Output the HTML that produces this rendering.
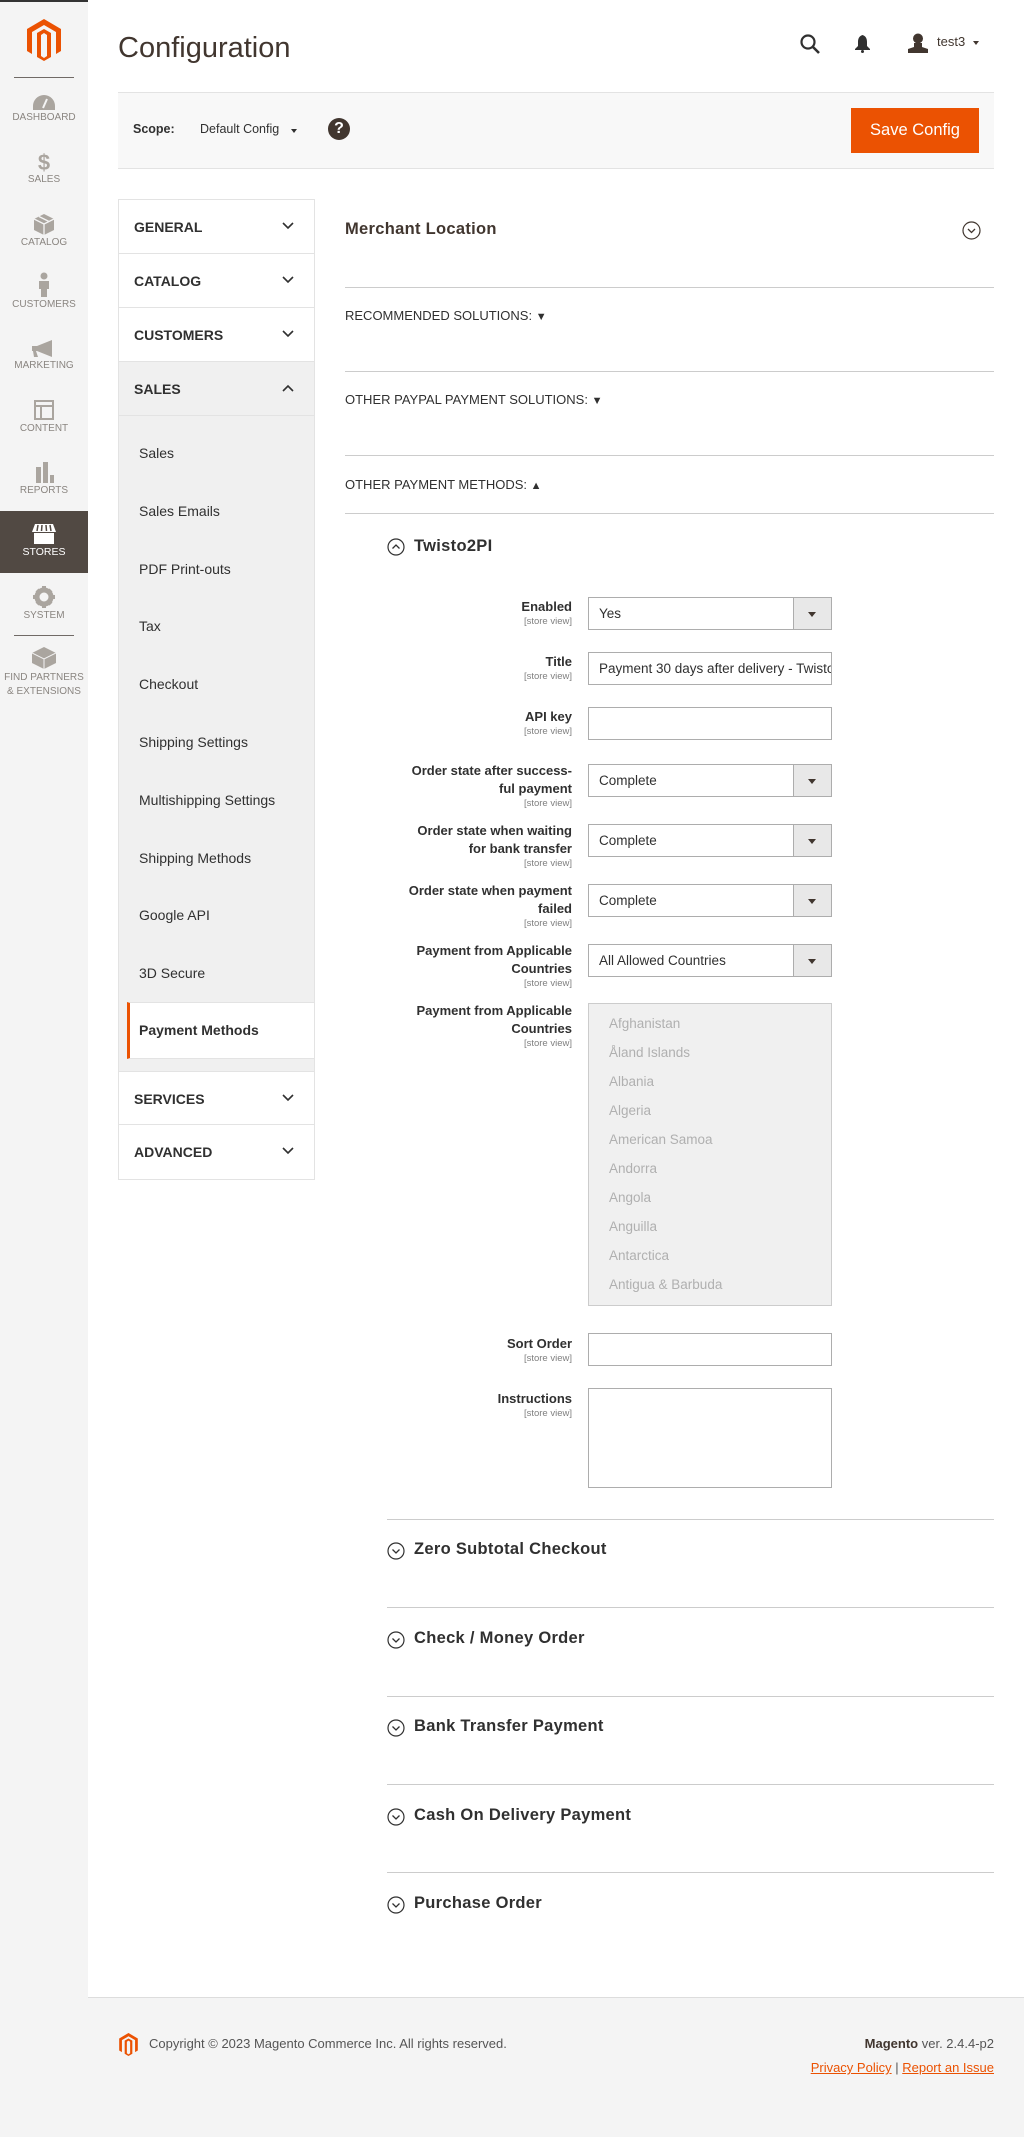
<!DOCTYPE html>
<html><head><meta charset="utf-8">
<style>
*{box-sizing:border-box;margin:0;padding:0}
body{width:1024px;height:2137px;position:relative;background:#fff;font-family:"Liberation Sans",Arial,sans-serif;color:#303030;overflow:hidden}
.abs{position:absolute}
#side{left:0;top:0;width:88px;height:2137px;background:#f4f4f4;border-top:2px solid #333}
.mi{position:absolute;left:0;width:88px;text-align:center;font-size:10px;color:#8a8580;letter-spacing:0}
.mi svg{display:block;margin:0 auto 2px}
.hr{position:absolute;left:14px;width:60px;height:1px;background:#706a66}
.nav{left:118px;width:197px;border:1px solid #e3e3e3;background:#fff}
.nh{height:54px;border-bottom:1px solid #e3e3e3;font-weight:bold;font-size:14px;line-height:54px;padding-left:15px;position:relative;color:#303030}
.nh svg{position:absolute;right:20px;top:22px}
.si{height:57.8px;line-height:58px;padding-left:20px;font-size:14px;color:#303030}
.lbl{position:absolute;right:452px;text-align:right;font-weight:bold;font-size:13px;line-height:18px;color:#303030}
.lbl small{display:block;font-weight:normal;font-size:9.5px;color:#808080;line-height:11px}
.inp{position:absolute;left:588px;width:244px;height:33px;border:1px solid #adadad;background:#fff;font-size:13.5px;line-height:31px;padding-left:10px;color:#303030;overflow:hidden;white-space:nowrap}
.sel:after{content:"";position:absolute;right:0;top:0;width:37px;height:31px;background:#e8e8e8;border-left:1px solid #adadad}
.sel:before{content:"";position:absolute;right:15px;top:14px;border:4px solid transparent;border-top:5px solid #41362f;z-index:2;border-bottom:0}
.line{position:absolute;height:1px;background:#ccc}
.sec{position:absolute;left:414px;font-size:16.5px;font-weight:bold;color:#303030;letter-spacing:.3px}
.circ{position:absolute;left:387px;width:18px;height:18px}
.grp{position:absolute;left:345px;font-size:13px;color:#303030}
</style></head><body>
<div id="side" class="abs">
 <svg class="abs" style="left:27px;top:17px" width="34" height="42" viewBox="0 0 34 42"><path d="M17 0L34 10V32L29 35V13L17 6L5 13V35L0 32V10Z M17 10L24 14V38L17 42L10 38V14Z M14 16V37L17 39L20 37V16L17 14Z" fill="#eb5202" fill-rule="evenodd"/></svg>
 <div class="hr" style="top:75px"></div>
 <div class="mi" style="top:93px"><svg width="22" height="15" viewBox="0 0 22 15"><path d="M11 0A11 11 0 0 0 0 11V15H22V11A11 11 0 0 0 11 0Z" fill="#aaa59f"/><path d="M10 13L14 4" stroke="#f4f4f4" stroke-width="2"/></svg>DASHBOARD</div>
 <div class="mi" style="top:150px"><div style="font-size:22px;font-weight:bold;color:#aaa59f;line-height:22px">$</div>SALES</div>
 <div class="mi" style="top:212px"><svg width="20" height="21" viewBox="0 0 20 21"><path d="M10 0L20 5V16L10 21L0 16V5Z" fill="#aaa59f"/><path d="M0 5L10 10L20 5M10 10V21M5 2.5L15 7.5" stroke="#f4f4f4" stroke-width="1.3" fill="none"/></svg>CATALOG</div>
 <div class="mi" style="top:270px"><svg width="12" height="25" viewBox="0 0 12 25"><circle cx="6" cy="4" r="3.5" fill="#aaa59f"/><path d="M1 9H11V17H9V25H3V17H1Z" fill="#aaa59f"/></svg>CUSTOMERS</div>
 <div class="mi" style="top:338px"><svg width="24" height="18" viewBox="0 0 24 18"><path d="M0 6H5L20 0V17L5 11H4L6 17H2L1 11H0Z" fill="#aaa59f"/></svg>MARKETING</div>
 <div class="mi" style="top:397px"><svg width="22" height="22" viewBox="0 0 22 22"><path d="M1 1H21V21H1Z M3 3V6H19V3Z M3 8V19H7V8Z M9 8V19H19V8Z" fill="#aaa59f" fill-rule="evenodd"/></svg>CONTENT</div>
 <div class="mi" style="top:460px"><svg width="20" height="21" viewBox="0 0 20 21"><path d="M2 5H7V21H2Z M9 0H14V21H9Z M16 13H20V21H16Z" fill="#aaa59f"/></svg>REPORTS</div>
 <div class="abs" style="left:0;top:509px;width:88px;height:62px;background:#514943"></div>
 <div class="mi" style="top:522px;color:#fff;font-size:10.5px"><svg width="24" height="20" viewBox="0 0 24 20"><path d="M3 0H21L24 8H0Z" fill="#fff"/><path d="M6 1L5 7M10 1L9.5 7M14 1L14.5 7M18 1L19 7" stroke="#514943" stroke-width="1.5"/><path d="M2 9H22V20H2Z" fill="#fff"/></svg>STORES</div>
 <div class="mi" style="top:584px"><svg width="22" height="22" viewBox="0 0 22 22"><circle cx="11" cy="11" r="7" fill="none" stroke="#aaa59f" stroke-width="5"/><path d="M9 0H13V4H9Z M9 18H13V22H9Z M0 9H4V13H0Z M18 9H22V13H18Z M2.5 5.5L5.5 2.5L8 5L5 8Z M16.5 19.5L19.5 16.5L17 14L14 17Z M2.5 16.5L5.5 19.5L8 17L5 14Z M19.5 5.5L16.5 2.5L14 5L17 8Z" fill="#aaa59f"/></svg>SYSTEM</div>
 <div class="hr" style="top:633px"></div>
 <div class="mi" style="top:645px;line-height:14px"><svg width="24" height="22" viewBox="0 0 24 22"><path d="M12 0L24 6V16L12 22L0 16V6Z" fill="#aaa59f"/><path d="M0 6L12 12L24 6M12 12V22" stroke="#f4f4f4" stroke-width="1" fill="none"/></svg>FIND PARTNERS<br>&amp; EXTENSIONS</div>
</div>

<div class="abs" style="left:118px;top:32px;font-size:29px;color:#41362f">Configuration</div>
<svg class="abs" style="left:800px;top:34px" width="21" height="20" viewBox="0 0 21 20"><circle cx="8" cy="8" r="6.5" fill="none" stroke="#303030" stroke-width="2.2"/><path d="M12.5 12.5L19 19" stroke="#303030" stroke-width="2.6"/></svg>
<svg class="abs" style="left:855px;top:35px" width="15" height="18" viewBox="0 0 15 18"><path d="M7.5 0C4 1 3 4 3 7V11L0 14V15H15V14L12 11V7C12 4 11 1 7.5 0Z" fill="#303030"/><circle cx="7.5" cy="16.5" r="1.5" fill="#303030"/></svg>
<svg class="abs" style="left:908px;top:33px" width="20" height="20" viewBox="0 0 20 20"><circle cx="10" cy="5.5" r="5" fill="#41362f"/><path d="M6 10H14L14 14L20 16V20H0V16L6 14Z" fill="#41362f"/></svg>
<div class="abs" style="left:937px;top:34px;font-size:13px;color:#41362f">test3</div>
<div class="abs" style="left:973px;top:41px;border:3.5px solid transparent;border-top:4.5px solid #41362f;border-bottom:0"></div>

<div class="abs" style="left:118px;top:92px;width:876px;height:77px;background:#f8f8f8;border-top:1px solid #e3e3e3;border-bottom:1px solid #e3e3e3"></div>
<div class="abs" style="left:133px;top:122px;font-size:12.5px;font-weight:bold">Scope:</div>
<div class="abs" style="left:200px;top:122px;font-size:12.5px">Default Config</div>
<div class="abs" style="left:291px;top:129px;border:3.5px solid transparent;border-top:4.5px solid #303030;border-bottom:0"></div>
<div class="abs" style="left:328px;top:118px;width:22px;height:22px;border-radius:50%;background:#41362f;color:#fff;font-weight:bold;font-size:16px;text-align:center;line-height:22px">?</div>
<div class="abs" style="left:851px;top:108px;width:128px;height:45px;background:#eb5202;color:#fff;font-size:16.5px;text-align:center;line-height:45px">Save Config</div>

<div class="abs nav" style="top:199px">
 <div class="nh">GENERAL<svg width="12" height="8" viewBox="0 0 12 8"><path d="M1 1L6 6L11 1" stroke="#303030" stroke-width="1.6" fill="none"/></svg></div>
 <div class="nh">CATALOG<svg width="12" height="8" viewBox="0 0 12 8"><path d="M1 1L6 6L11 1" stroke="#303030" stroke-width="1.6" fill="none"/></svg></div>
 <div class="nh">CUSTOMERS<svg width="12" height="8" viewBox="0 0 12 8"><path d="M1 1L6 6L11 1" stroke="#303030" stroke-width="1.6" fill="none"/></svg></div>
 <div class="nh" style="background:#f0f0f0">SALES<svg width="12" height="8" viewBox="0 0 12 8"><path d="M1 7L6 2L11 7" stroke="#303030" stroke-width="1.6" fill="none"/></svg></div>
 <div style="background:#f0f0f0;padding:0 0 12px 0">
  <div style="height:8px"></div>
  <div class="si">Sales</div><div class="si">Sales Emails</div><div class="si">PDF Print-outs</div><div class="si">Tax</div><div class="si">Checkout</div><div class="si">Shipping Settings</div><div class="si">Multishipping Settings</div><div class="si">Shipping Methods</div><div class="si">Google API</div><div class="si">3D Secure</div>
  <div class="si" style="background:#fff;border-left:3px solid #eb5202;padding-left:9px;margin-left:8px;font-weight:bold;border-top:1px solid #e3e3e3;border-bottom:1px solid #e3e3e3;height:57px;line-height:55px">Payment Methods</div>
 </div>
 <div class="nh" style="border-top:1px solid #e3e3e3">SERVICES<svg width="12" height="8" viewBox="0 0 12 8"><path d="M1 1L6 6L11 1" stroke="#303030" stroke-width="1.6" fill="none"/></svg></div>
 <div class="nh" style="border-bottom:0">ADVANCED<svg width="12" height="8" viewBox="0 0 12 8"><path d="M1 1L6 6L11 1" stroke="#303030" stroke-width="1.6" fill="none"/></svg></div>
</div>

<div class="abs" style="left:345px;top:220px;font-size:16.5px;font-weight:bold;color:#41362f;letter-spacing:.3px">Merchant Location</div>
<svg class="abs" style="left:962px;top:221px" width="19" height="19" viewBox="0 0 19 19"><circle cx="9.5" cy="9.5" r="8.5" fill="none" stroke="#41362f" stroke-width="1.2"/><path d="M6 8L9.5 11.5L13 8" stroke="#41362f" stroke-width="1.3" fill="none"/></svg>
<div class="line" style="left:345px;top:287px;width:649px"></div>
<div class="grp" style="top:308px">RECOMMENDED SOLUTIONS: <span style="font-size:11px">▼</span></div>
<div class="line" style="left:345px;top:371px;width:649px"></div>
<div class="grp" style="top:392px">OTHER PAYPAL PAYMENT SOLUTIONS: <span style="font-size:11px">▼</span></div>
<div class="line" style="left:345px;top:455px;width:649px"></div>
<div class="grp" style="top:477px">OTHER PAYMENT METHODS: <span style="font-size:11px">▲</span></div>
<div class="line" style="left:345px;top:513px;width:649px"></div>

<svg class="circ" style="top:538px" viewBox="0 0 18 18"><circle cx="9" cy="9" r="8" fill="none" stroke="#303030" stroke-width="1.2"/><path d="M5.5 10.5L9 7L12.5 10.5" stroke="#303030" stroke-width="1.3" fill="none"/></svg>
<div class="sec" style="top:537px">Twisto2PI</div>

<div class="lbl" style="top:598px">Enabled<small>[store view]</small></div>
<div class="inp sel" style="top:597px">Yes</div>
<div class="lbl" style="top:653px">Title<small>[store view]</small></div>
<div class="inp" style="top:652px">Payment 30 days after delivery - Twisto</div>
<div class="lbl" style="top:708px">API key<small>[store view]</small></div>
<div class="inp" style="top:707px"></div>
<div class="lbl" style="top:762px">Order state after success-<br>ful payment<small>[store view]</small></div>
<div class="inp sel" style="top:764px">Complete</div>
<div class="lbl" style="top:822px">Order state when waiting<br>for bank transfer<small>[store view]</small></div>
<div class="inp sel" style="top:824px">Complete</div>
<div class="lbl" style="top:882px">Order state when payment<br>failed<small>[store view]</small></div>
<div class="inp sel" style="top:884px">Complete</div>
<div class="lbl" style="top:942px">Payment from Applicable<br>Countries<small>[store view]</small></div>
<div class="inp sel" style="top:944px">All Allowed Countries</div>
<div class="lbl" style="top:1002px">Payment from Applicable<br>Countries<small>[store view]</small></div>
<div class="abs" style="left:588px;top:1003px;width:244px;height:303px;background:#f0f0f0;border:1px solid #ccc;padding:5px 0 0 20px;font-size:13.5px;line-height:29px;color:#b0b0b0">Afghanistan<br>Åland Islands<br>Albania<br>Algeria<br>American Samoa<br>Andorra<br>Angola<br>Anguilla<br>Antarctica<br>Antigua &amp; Barbuda</div>
<div class="lbl" style="top:1335px">Sort Order<small>[store view]</small></div>
<div class="inp" style="top:1333px"></div>
<div class="lbl" style="top:1390px">Instructions<small>[store view]</small></div>
<div class="inp" style="top:1388px;height:100px"></div>

<div class="line" style="left:387px;top:1519px;width:607px"></div>
<svg class="circ" style="top:1542px" viewBox="0 0 18 18"><circle cx="9" cy="9" r="8" fill="none" stroke="#303030" stroke-width="1.2"/><path d="M5.5 7.5L9 11L12.5 7.5" stroke="#303030" stroke-width="1.3" fill="none"/></svg>
<div class="sec" style="top:1540px">Zero Subtotal Checkout</div>
<div class="line" style="left:387px;top:1607px;width:607px"></div>
<svg class="circ" style="top:1631px" viewBox="0 0 18 18"><circle cx="9" cy="9" r="8" fill="none" stroke="#303030" stroke-width="1.2"/><path d="M5.5 7.5L9 11L12.5 7.5" stroke="#303030" stroke-width="1.3" fill="none"/></svg>
<div class="sec" style="top:1629px">Check / Money Order</div>
<div class="line" style="left:387px;top:1696px;width:607px"></div>
<svg class="circ" style="top:1719px" viewBox="0 0 18 18"><circle cx="9" cy="9" r="8" fill="none" stroke="#303030" stroke-width="1.2"/><path d="M5.5 7.5L9 11L12.5 7.5" stroke="#303030" stroke-width="1.3" fill="none"/></svg>
<div class="sec" style="top:1717px">Bank Transfer Payment</div>
<div class="line" style="left:387px;top:1784px;width:607px"></div>
<svg class="circ" style="top:1808px" viewBox="0 0 18 18"><circle cx="9" cy="9" r="8" fill="none" stroke="#303030" stroke-width="1.2"/><path d="M5.5 7.5L9 11L12.5 7.5" stroke="#303030" stroke-width="1.3" fill="none"/></svg>
<div class="sec" style="top:1806px">Cash On Delivery Payment</div>
<div class="line" style="left:387px;top:1872px;width:607px"></div>
<svg class="circ" style="top:1896px" viewBox="0 0 18 18"><circle cx="9" cy="9" r="8" fill="none" stroke="#303030" stroke-width="1.2"/><path d="M5.5 7.5L9 11L12.5 7.5" stroke="#303030" stroke-width="1.3" fill="none"/></svg>
<div class="sec" style="top:1894px">Purchase Order</div>

<div class="abs" style="left:88px;top:1997px;width:936px;height:140px;background:#f4f4f4;border-top:1px solid #ddd"></div>
<svg class="abs" style="left:119px;top:2033px" width="19" height="23" viewBox="0 0 34 42"><path d="M17 0L34 10V32L29 35V13L17 6L5 13V35L0 32V10Z M17 10L24 14V38L17 42L10 38V14Z M14 16V37L17 39L20 37V16L17 14Z" fill="#eb5202" fill-rule="evenodd"/></svg>
<div class="abs" style="left:149px;top:2036px;font-size:13px;color:#555">Copyright © 2023 Magento Commerce Inc. All rights reserved.</div>
<div class="abs" style="right:30px;top:2036px;font-size:13px;color:#555"><b style="color:#41362f">Magento</b> ver. 2.4.4-p2</div>
<div class="abs" style="right:30px;top:2060px;font-size:13px;color:#555"><span style="color:#eb5202;text-decoration:underline">Privacy Policy</span> | <span style="color:#eb5202;text-decoration:underline">Report an Issue</span></div>
</body></html>
